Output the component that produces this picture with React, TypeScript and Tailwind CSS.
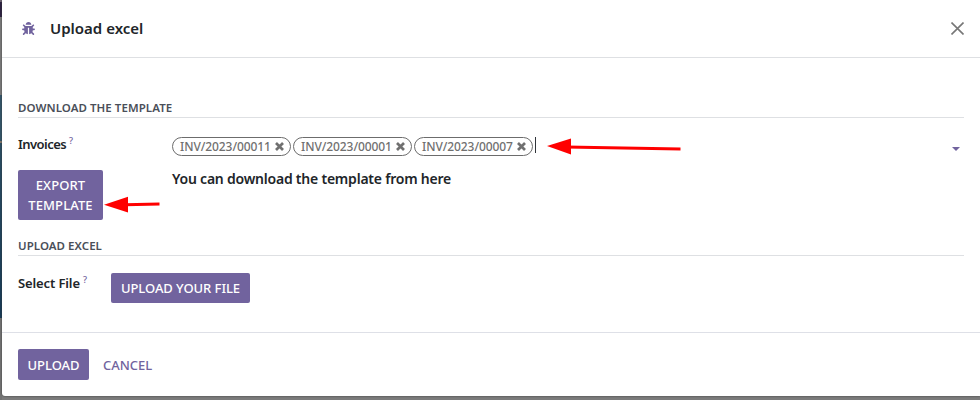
import React from "react";
import { FaBug } from "react-icons/fa";

const primary =
  "rounded-[2px] bg-[#71639e] text-center text-[13px] font-medium leading-5 text-white";

function Tag({ children }: { children: string }) {
  return (
    <span className="flex h-[19px] w-[119px] items-center whitespace-nowrap rounded-full border border-[#6c6c6c] pl-[7px] text-[12px] font-medium leading-none text-[#707070]">
      <span className="w-[95px] tracking-[-0.08px]">{children}</span>
      <svg className="h-[9px] w-[9px]" viewBox="0 0 9 9" stroke="#707070" strokeWidth="2.7">
        <path d="M1 1 L8 8 M8 1 L1 8" />
      </svg>
    </span>
  );
}

function Section({ children }: { children: string }) {
  return (
    <h2 className="mr-4 h-[18px] whitespace-nowrap border-b border-[#dee0e3] text-[11.5px] font-semibold leading-[15px] tracking-[0.06px] text-[#4a4f59]">
      {children}
    </h2>
  );
}

function Backdrop() {
  return (
    <div className="flex w-[2px] flex-col bg-[#777]">
      <div className="h-[2px] bg-[#706574]" />
      <div className="h-[15px] bg-[#2d2141]" />
      <div className="h-[78px] bg-[#7b7b7b]" />
      <div className="h-[46px] bg-[#34566a]" />
      <div className="h-[2px] bg-[#85796b]" />
      <div className="h-[175px] bg-gradient-to-b from-[#2b4e64] to-[#173b57]" />
      <div className="flex-1 bg-[#737373]" />
    </div>
  );
}

export default function App() {
  return (
    <div className="relative flex h-[400px] w-[980px] overflow-hidden bg-[#7b7b7b] font-['Noto_Sans',sans-serif] text-[#212529]">
      <Backdrop />
      <main className="flex h-[396px] flex-1 flex-col rounded-bl-[3px] bg-white pl-4 shadow-[0_0_2px_#333]">
        <header className="-ml-4 flex h-[58px] items-center border-b border-[#dee0e3] pl-[20px]">
          <FaBug className="-mt-px h-[13px] w-[13px] text-[#71639e]" />
          <h1 className="-mt-[2px] ml-[15px] text-[15px] font-semibold leading-5">Upload excel</h1>
          <svg className="ml-auto mr-4 h-[13px] w-[13px]" viewBox="0 0 13 13" stroke="#777" strokeWidth="1.6">
            <path d="M.5 .5 L12.5 12.5 M12.5 .5 L.5 12.5" />
          </svg>
        </header>

        <div className="mt-[42px]">
          <Section>DOWNLOAD THE TEMPLATE</Section>
        </div>
        <div className="mt-[19px] flex h-[19px]">
          <label className="flex w-[154px] text-[13px] font-semibold leading-[14px] tracking-[-0.55px]">
            Invoices
            <sup className="top-0 ml-[3px] text-[9px] font-medium leading-[8px] text-[#71639e]">?</sup>
          </label>
          <div className="flex gap-[2px]">
            <Tag>INV/2023/00011</Tag>
            <Tag>INV/2023/00001</Tag>
            <Tag>INV/2023/00007</Tag>
            <span className="h-4 w-px bg-[#30343a]" />
          </div>
          <svg className="ml-auto mr-5 mt-[10px] h-1 w-2" viewBox="0 0 8 4" fill="#71639e">
            <path d="M0 0H8L4 4Z" />
          </svg>
        </div>
        <div className="mt-[14px] flex h-[50px]">
          <button className={`${primary} h-[50px] w-[85px] py-[5px] tracking-[0.1px]`}>
            EXPORT
            <br />
            TEMPLATE
          </button>
          <p className="ml-[69px] whitespace-nowrap text-[14px] font-semibold leading-[18px] tracking-[-0.22px]">
            You can download the template from here
          </p>
        </div>
        <div className="mt-[18px]">
          <Section>UPLOAD EXCEL</Section>
        </div>
        <div className="mt-[17px] flex h-[30px]">
          <label className="flex w-[93px] text-[13px] font-semibold leading-[20px] tracking-[-0.12px]">
            Select File
            <sup className="top-0 ml-[3px] mt-[3px] text-[9px] font-medium leading-[8px] text-[#71639e]">?</sup>
          </label>
          <button className={`${primary} h-[30px] w-[139px] whitespace-nowrap tracking-[-0.05px]`}>UPLOAD YOUR FILE</button>
        </div>
        <footer className="-ml-4 mt-[29px] flex flex-1 border-t border-[#dee0e7] pl-4 pt-4">
          <button className={`${primary} h-[31px] w-[71px]`}>UPLOAD</button>
          <button className="ml-[14px] h-[31px] pt-[2px] text-[13px] font-medium text-[#71639e]">CANCEL</button>
        </footer>
      </main>

      <svg className="pointer-events-none absolute left-0 top-0 h-[400px] w-[980px]" fill="#f00" stroke="#f00">
        <path d="M566 147 L680.500 149" strokeWidth="3" />
        <path d="M547 146 L571 138.500 V154.500Z" stroke="none" />
        <path d="M125 204.800 L159.500 204" strokeWidth="3" />
        <path d="M104 204.800 L128 196.800 V212.500Z" stroke="none" />
      </svg>
    </div>
  );
}
